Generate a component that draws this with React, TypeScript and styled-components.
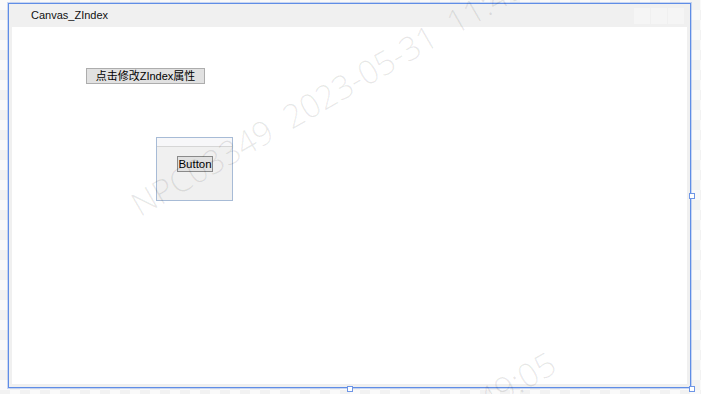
import styled, { createGlobalStyle } from "styled-components";

const GlobalStyle = createGlobalStyle`
  html, body {
    margin: 0;
    padding: 0;
  }
  body {
    font-family: "Liberation Sans", "Noto Sans CJK SC", sans-serif;
    font-size: 12px;
    color: #000;
  }
`;

const Stage = styled.div`
  position: relative;
  width: 701px;
  height: 394px;
  overflow: hidden;
  box-sizing: border-box;
  padding: 3px 10px 6px 8px;
  background-color: #fafafa;
  background-image: conic-gradient(
    #f2f2f2 25%,
    transparent 0 50%,
    #f2f2f2 0 75%,
    transparent 0
  );
  background-size: 20px 20px;
`;

const Frame = styled.div`
  position: relative;
  height: 100%;
  box-sizing: border-box;
  border: 1px solid #5f8de6;
  box-shadow: 0 0 0 1px rgba(110, 150, 232, 0.35);
  background: #f0f0f0;
  display: flex;
  flex-direction: column;
  padding: 0 3px 3px 3px;
`;

const TitleBar = styled.div`
  height: 23px;
  display: flex;
  align-items: center;
  padding-left: 19px;
  padding-right: 3px;
  color: #111;
  font-family: "Liberation Sans", "Noto Sans CJK SC", sans-serif;
  font-size: 11px;
`;

const Title = styled.span`
  flex: 1;
  margin-top: -2px;
`;

const CaptionButtons = styled.div`
  display: flex;
  gap: 1px;
  align-self: flex-start;
  margin-top: 4px;
`;

const CaptionButton = styled.div`
  width: 16px;
  height: 16px;
  background: #f5f5f5;
`;

const Client = styled.div`
  flex: 1;
  background: #fff;
  display: flex;
  flex-direction: column;
  align-items: flex-start;
  padding: 41px 0 0 74px;
`;

const ClassicButton = styled.button`
  box-sizing: border-box;
  height: 16px;
  padding: 0;
  border: 1px solid #adadad;
  background: #e1e1e1;
  color: #000;
  font-family: "Liberation Sans", "Noto Sans CJK SC", sans-serif;
  font-size: 11px;
  line-height: 14px;
  display: flex;
  align-items: center;
  justify-content: center;
`;

const WideButton = styled(ClassicButton)`
  width: 119px;
`;

const ChildWindow = styled.div`
  margin: 53px 0 0 70px;
  width: 77px;
  height: 64px;
  box-sizing: border-box;
  border: 1px solid #a7bbd6;
  background: #f0f0f0;
  display: flex;
  flex-direction: column;
  align-items: flex-start;
`;

const ChildStrip = styled.div`
  align-self: stretch;
  height: 8px;
  background: #f7f7f9;
  border-bottom: 1px solid #d6d6d6;
`;

const SmallButton = styled(ClassicButton)`
  width: 36px;
  margin: 9px 0 0 20px;
  border-color: #8a8a8a;
  font-size: 11.5px;
`;

const Handle = styled.div<{ $x: number; $y: number }>`
  position: absolute;
  left: ${(p) => p.$x}px;
  top: ${(p) => p.$y}px;
  width: 4px;
  height: 4px;
  border: 1px solid #6f96e6;
  background: #fff;
`;

const Watermark = styled.div<{ $x: number; $y: number }>`
  position: absolute;
  left: ${(p) => p.$x}px;
  top: ${(p) => p.$y}px;
  transform-origin: 0 100%;
  transform: rotate(-30deg);
  white-space: pre;
  pointer-events: none;
  font-family: "Open Sans", "Noto Sans", sans-serif;
  font-weight: 300;
  font-size: 33px;
  line-height: 33px;
  color: rgba(0, 0, 0, 0.09);
`;

const stamp = "NPC03349  2023-05-31  11:49:05";

export default function App() {
  return (
    <>
      <GlobalStyle />
      <Stage>
        <Frame>
          <TitleBar>
            <Title>Canvas_ZIndex</Title>
            <CaptionButtons>
              <CaptionButton />
              <CaptionButton />
              <CaptionButton />
            </CaptionButtons>
          </TitleBar>
          <Client>
            <WideButton>点击修改ZIndex属性</WideButton>
            <ChildWindow>
              <ChildStrip />
              <SmallButton>Button</SmallButton>
            </ChildWindow>
          </Client>
        </Frame>
        <Handle $x={689} $y={193} />
        <Handle $x={347} $y={386} />
        <Handle $x={689} $y={386} />
        <Watermark $x={142} $y={188}>{stamp}</Watermark>
        <Watermark $x={134} $y={588}>{stamp}</Watermark>
      </Stage>
    </>
  );
}
